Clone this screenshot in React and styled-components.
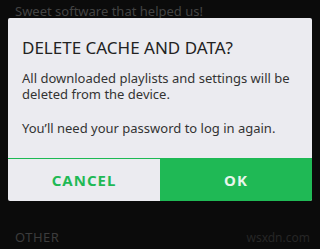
import styled, { createGlobalStyle } from "styled-components"

const GlobalStyle = createGlobalStyle`
    html, body {
        margin: 0;
        padding: 0;
        background: #0b0b0b;
    }
    body {
        font-family: "Noto Sans", "Liberation Sans", sans-serif;
    }
`

export default function App () {
    return (
        <>
            <GlobalStyle />
            <Screen>
                <Faded>Sweet software that helped us!</Faded>
                <Dialog>
                    <Title>DELETE CACHE AND DATA?</Title>
                    <Body>
                        <p>All downloaded playlists and settings will be deleted from the device.</p>
                        <p>You’ll need your password to log in again.</p>
                    </Body>
                    <Actions>
                        <Action>CANCEL</Action>
                        <Action primary>OK</Action>
                    </Actions>
                </Dialog>
                <Footer>
                    <Section>OTHER</Section>
                    <Mark>wsxdn.com</Mark>
                </Footer>
            </Screen>
        </>
    )
}

const Screen = styled.div`
    width: 320px;
    height: 249px;
    overflow: hidden;
    display: flex;
    flex-direction: column;
    background: #0b0b0b;
`

const Faded = styled.div`
    height: 18px;
    padding-left: 15px;
    color: #444;
    font-size: 13px;
    line-height: 14px;
    display: flex;
    align-items: flex-end;
`

const Dialog = styled.div`
    margin: 0 8px;
    background: #ebebf0;
    border-radius: 2px;
    display: flex;
    flex-direction: column;
`

const Title = styled.h1`
    margin: 0;
    padding: 18px 14px 0 14px;
    font-size: 17px;
    font-weight: 400;
    line-height: 24px;
    color: #222;
`

const Body = styled.div`
    padding: 10px 14px 0 14px;
    height: 98px;
    box-sizing: border-box;
    color: #333;
    font-size: 13px;
    line-height: 16px;
    p {
        margin: 0 0 18px 0;
    }
`

const Actions = styled.div`
    display: flex;
    border-top: 1px solid #1db954;
    height: 42px;
`

const Action = styled.button`
    flex: 1;
    border: none;
    margin: 0;
    font-family: "Noto Sans", "Liberation Sans", sans-serif;
    font-size: 15px;
    font-weight: 700;
    letter-spacing: 1px;
    background: ${props => props.primary ? '#1fb955' : 'transparent'};
    color: ${props => props.primary ? '#e8f5ec' : '#1fb955'};
    border-bottom-right-radius: ${props => props.primary ? '2px' : '0'};
`

const Footer = styled.div`
    flex: 1;
    display: flex;
    justify-content: space-between;
    align-items: flex-end;
    padding: 0 10px 3px 15px;
`

const Section = styled.div`
    color: #3c3c3c;
    font-size: 13px;
    letter-spacing: 0.5px;
`

const Mark = styled.div`
    color: #262626;
    font-size: 12px;
`
